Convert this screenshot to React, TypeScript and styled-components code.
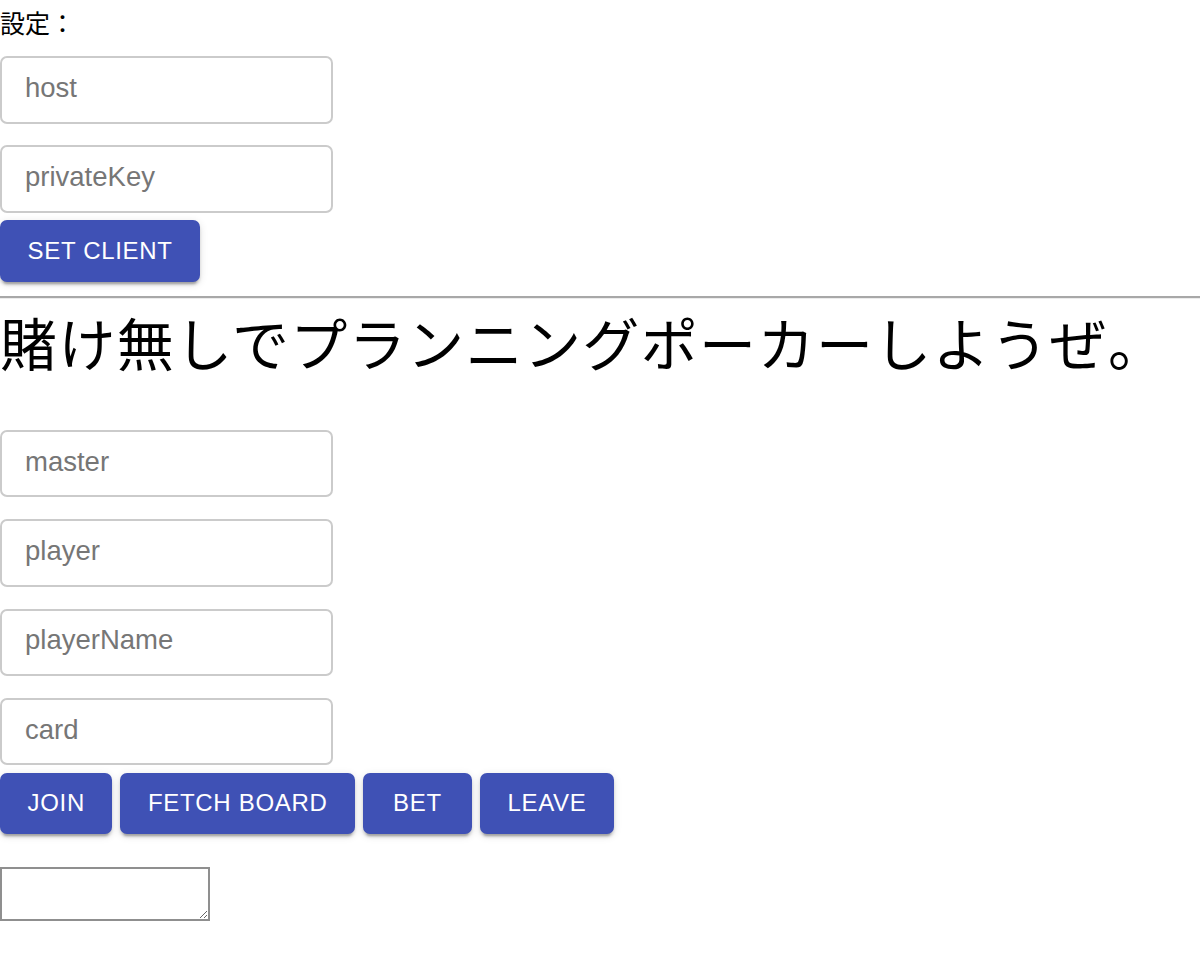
import styled, { createGlobalStyle } from 'styled-components';

const GlobalStyle = createGlobalStyle`
  html,
  body {
    margin: 0;
    padding: 0;
    background: #fff;
  }
`;

const Page = styled.div`
  display: flex;
  flex-direction: column;
  align-items: flex-start;
  width: 1200px;
`;

const Label = styled.div`
  font-family: 'Noto Sans CJK JP', serif;
  font-size: 25px;
  line-height: 36px;
  height: 36px;
  padding-top: 4px;
  color: #000;
  margin-bottom: 1.5px;
`;

const Field = styled.input`
  box-sizing: border-box;
  width: 333px;
  height: 67.5px;
  margin: 14.5px 0 7.3px;
  padding: 0 24px 4px 23px;
  border: 2px solid #cbcbcb;
  border-radius: 7px;
  background: #fff;
  font-family: 'Liberation Sans', Arial, sans-serif;
  font-size: 27.5px;
  color: #222;
  outline: none;

  &::placeholder {
    color: #767676;
    opacity: 1;
  }
`;

const ButtonRow = styled.div`
  display: flex;
  gap: 8px;
`;

const ActionButton = styled.button`
  box-sizing: border-box;
  height: 61.5px;
  min-width: 109px;
  padding: 0 27.5px;
  display: flex;
  align-items: center;
  justify-content: center;
  border: none;
  border-radius: 7px;
  background: #3f51b5;
  color: #fff;
  font-family: 'Liberation Sans', Arial, sans-serif;
  font-size: 24px;
  font-weight: 500;
  letter-spacing: 0.686px;
  text-transform: uppercase;
  cursor: pointer;
  box-shadow: 0 5px 2px -3px rgba(0, 0, 0, 0.2), 0 3px 3px 0 rgba(0, 0, 0, 0.14),
    0 2px 8px 0 rgba(0, 0, 0, 0.12);
`;

const Divider = styled.hr`
  align-self: stretch;
  margin: 14.4px 0 0;
  border: none;
  border-top: 2px solid #a8a8a8;
  border-bottom: 1px solid #ececec;
  height: 0;
`;

const Title = styled.h1`
  margin: 14px 0 45.5px;
  font-family: 'Noto Sans CJK JP', sans-serif;
  font-size: 57px;
  font-weight: 400;
  line-height: 57px;
  letter-spacing: 1.4px;
  color: #000;
  white-space: nowrap;
`;

const Output = styled.textarea`
  box-sizing: border-box;
  width: 210px;
  height: 54px;
  margin-top: 32.5px;
  padding: 2px;
  border: 2px solid #8f8f8f;
  border-radius: 0;
  font-family: 'Liberation Mono', monospace;
  font-size: 13px;
  outline: none;
`;

const settings = ['host', 'privateKey'];
const gameFields = ['master', 'player', 'playerName', 'card'];
const actions = ['Join', 'Fetch Board', 'Bet', 'Leave'];

export default function App() {
  return (
    <>
      <GlobalStyle />
      <Page>
        <Label>設定：</Label>
        {settings.map((name) => (
          <Field key={name} placeholder={name} />
        ))}
        <ButtonRow>
          <ActionButton>Set Client</ActionButton>
        </ButtonRow>
        <Divider />
        <Title>賭け無しでプランニングポーカーしようぜ。</Title>
        {gameFields.map((name) => (
          <Field key={name} placeholder={name} />
        ))}
        <ButtonRow>
          {actions.map((label) => (
            <ActionButton key={label}>{label}</ActionButton>
          ))}
        </ButtonRow>
        <Output />
      </Page>
    </>
  );
}
